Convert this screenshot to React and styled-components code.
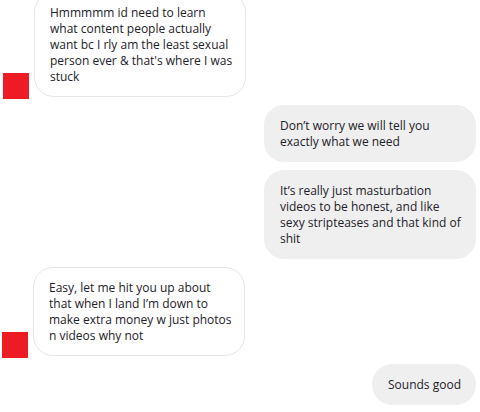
import React from 'react'
import styled, { createGlobalStyle } from 'styled-components'

const GlobalStyle = createGlobalStyle`
  html, body {
    margin: 0;
    padding: 0;
    background: #ffffff;
    overflow: hidden;
  }
  body {
    font-family: "Open Sans", "Noto Sans", Arial, sans-serif;
  }
`

const Thread = styled.div`
  width: 480px;
  height: 412px;
  overflow: hidden;
  box-sizing: border-box;
  padding: 0 4px 0 2px;
`

const Messages = styled.div`
  display: flex;
  flex-direction: column;
  gap: 8px;
  margin-top: -8px;
`

const Row = styled.div`
  display: flex;
  align-items: flex-end;
  justify-content: ${p => (p.$mine ? 'flex-end' : 'flex-start')};
  gap: 5px;
`

const Avatar = styled.div`
  width: 26px;
  height: 26px;
  flex: none;
  background: #ed1c24;
  margin-bottom: -2px;
  margin-left: ${p => p.$shift || 0}px;
`

const Bubble = styled.div`
  box-sizing: border-box;
  width: ${p => (p.$wide ? '212px' : 'auto')};
  padding: 12px 14px 11px 15px;
  border-radius: 20px;
  font-size: 12px;
  line-height: 16px;
  color: #1d2129;
  background: ${p => (p.$mine ? '#efefef' : '#ffffff')};
  border: 1px solid ${p => (p.$mine ? '#efefef' : '#e6e6e6')};
`

const Line = styled.span`
  display: block;
  white-space: nowrap;
`

const messages = [
  {
    mine: false,
    shift: 1,
    lines: [
      'Hmmmmm id need to learn',
      'what content people actually',
      'want bc I rly am the least sexual',
      "person ever & that's where I was",
      'stuck',
    ],
  },
  {
    mine: true,
    lines: ['Don\u2019t worry we will tell you', 'exactly what we need'],
  },
  {
    mine: true,
    lines: [
      'It\u2019s really just masturbation',
      'videos to be honest, and like',
      'sexy stripteases and that kind of',
      'shit',
    ],
  },
  {
    mine: false,
    shift: 0,
    lines: [
      'Easy, let me hit you up about',
      'that when I land I\u2019m down to',
      'make extra money w just photos',
      'n videos why not',
    ],
  },
  {
    mine: true,
    lines: ['Sounds good'],
  },
]

export default function App() {
  return (
    <Thread>
      <GlobalStyle />
      <Messages>
        {messages.map((m, i) => (
          <Row key={i} $mine={m.mine}>
            {!m.mine && <Avatar $shift={m.shift} />}
            <Bubble $mine={m.mine} $wide={m.lines.length > 1}>
              {m.lines.map((l, j) => (
                <Line key={j}>{l}</Line>
              ))}
            </Bubble>
          </Row>
        ))}
      </Messages>
    </Thread>
  )
}
